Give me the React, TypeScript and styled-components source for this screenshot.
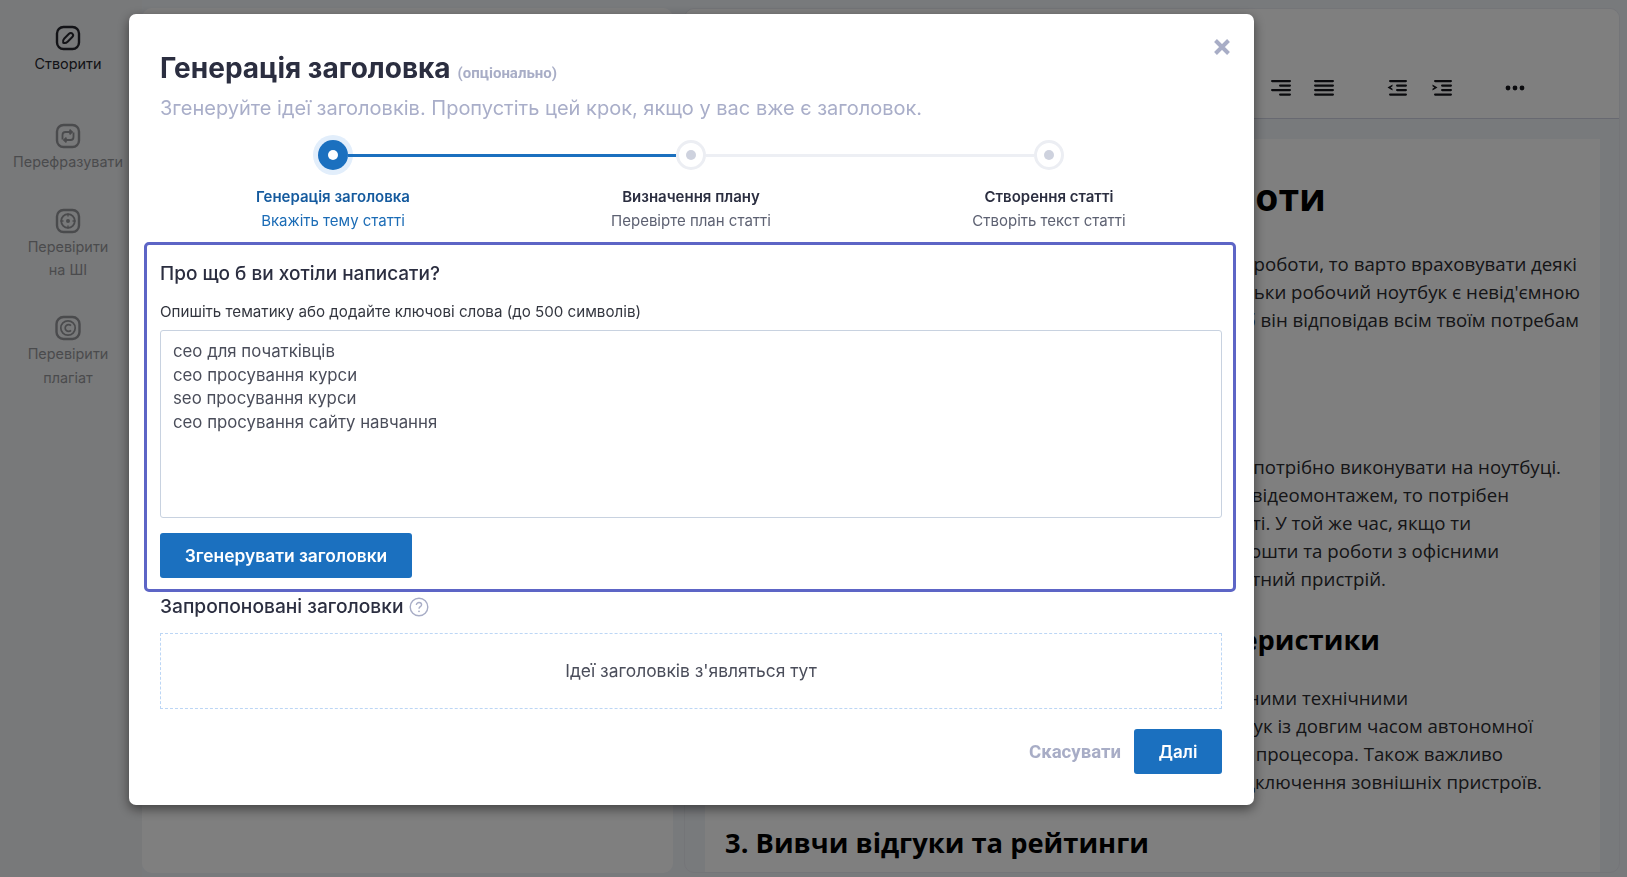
import React from "react";
import styled, { createGlobalStyle } from "styled-components";

const Global = createGlobalStyle`
  html, body { margin: 0; padding: 0; height: 100%; overflow: hidden; }
  body { background: #f1f4f9; font-family: Inter, "Noto Sans", sans-serif; }
  * { box-sizing: border-box; }
`;

const Page = styled.div`
  display: flex;
  height: 877px;
  padding: 8px 6px 4px 0;
  overflow: hidden;
`;
const Sidebar = styled.nav`
  width: 142px;
  margin-top: -8px;
  margin-bottom: -4px;
  padding: 25px 6px 0 0;
  display: flex;
  flex-direction: column;
  gap: 33.7px;
  background: #f1f2f4;
`;
const NavItem = styled.div<{ $active?: boolean }>`
  display: flex;
  flex-direction: column;
  align-items: center;
  font-size: 14.4px;
  line-height: 23.5px;
  text-align: center;
  color: #26272e;
  opacity: ${(p) => (p.$active ? 1 : 0.45)};
  margin-bottom: ${(p) => (p.$active ? "14.3px" : "0")};
  svg { display: block; margin-bottom: 1px; }
`;
const LeftPanel = styled.section`
  width: 531px;
  background: #fff;
  border-radius: 10px;
`;
const RightPanel = styled.section`
  width: 936px;
  margin-left: 11px;
  background: #f1f4f9;
  border-radius: 10px;
  border: 1px solid #e8ebf1;
  display: flex;
  flex-direction: column;
  overflow: hidden;
`;
const Toolbar = styled.div`
  flex: none;
  height: 110px;
  background: #fff;
  border-bottom: 1px solid #d0d3e2;
  display: flex;
  justify-content: flex-end;
  align-items: flex-end;
  padding: 0 94px 21px 0;
`;
const ToolIcon = styled.svg<{ $gap: number }>`
  width: 20px;
  height: 18px;
  margin-left: ${(p) => p.$gap}px;
  fill: #16171c;
`;
const Sheet = styled.article`
  flex: 1;
  margin: 20px 19px 0 20px;
  padding: 37px 20px 0 20px;
  background: #fff;
  font-family: "Open Sans", sans-serif;
  color: #2a2a2e;
  overflow: hidden;
`;
const H1 = styled.h1<{ $inset: number }>`
  margin: 0 0 32px;
  padding-right: ${(p) => p.$inset}px;
  font-size: 37.33px;
  line-height: 42px;
  font-weight: 700;
  color: #000;
  text-align: right;
  white-space: nowrap;
`;
const H2 = styled.h2<{ $inset?: number; $after?: number; $before?: number }>`
  margin: ${(p) => p.$before ?? 27}px 0 ${(p) => p.$after ?? 24}px;
  padding-right: ${(p) => p.$inset ?? 0}px;
  font-size: 27.33px;
  line-height: 40px;
  font-weight: 700;
  color: #000;
  text-align: ${(p) => (p.$inset ? "right" : "left")};
  white-space: nowrap;
`;
const Para = styled.div`
  font-size: 18.67px;
  line-height: 28px;
`;
const Line = styled.div<{ $inset: number }>`
  padding-right: ${(p) => p.$inset}px;
  text-align: right;
  white-space: nowrap;
`;

const Overlay = styled.div`
  position: fixed;
  inset: 0;
  background: rgba(0, 0, 0, 0.5);
  padding: 14px 0 0 129px;
`;
const Modal = styled.div`
  position: relative;
  width: 1125px;
  height: 791px;
  padding: 34px 32px 31px 31px;
  background: #fff;
  border-radius: 7px;
  box-shadow: 0 4px 12px rgba(0, 0, 0, 0.5);
`;
const CloseButton = styled.button`
  position: absolute;
  top: 23px;
  right: 22px;
  width: 20px;
  height: 20px;
  padding: 0;
  border: 0;
  background: none;
  svg { display: block; }
`;
const TitleRow = styled.div`
  display: flex;
  align-items: baseline;
  gap: 7px;
  height: 40px;
  line-height: 40px;
`;
const Title = styled.h2`
  margin: 0;
  font-size: 28px;
  font-weight: 700;
  color: #2b2e40;
  line-height: 40px;
`;
const Optional = styled.span`
  font-family: Roboto, sans-serif;
  font-size: 15px;
  font-weight: 700;
  color: #a8adc6;
`;
const Subtitle = styled.p`
  margin: 6px 0 0;
  font-size: 20px;
  line-height: 28px;
  color: #a9aec9;
`;
const Stepper = styled.div`
  display: grid;
  grid-template-columns: repeat(3, 358px);
  margin: 13px -6px 0;
`;
const Step = styled.div`
  position: relative;
  display: flex;
  flex-direction: column;
  align-items: center;
`;
const Connector = styled.span<{ $active?: boolean }>`
  position: absolute;
  top: 19px;
  left: calc(50% + 15px);
  width: calc(100% - 30px);
  height: 3px;
  background: ${(p) => (p.$active ? "#1b70bf" : "#edeff4")};
`;
const DotSlot = styled.div`
  height: 40px;
  display: flex;
  align-items: center;
`;
const Dot = styled.span<{ $active?: boolean }>`
  width: 30px;
  height: 30px;
  display: flex;
  align-items: center;
  justify-content: center;
  border-radius: 50%;
  background: ${(p) => (p.$active ? "#1b70bf" : "#fff")};
  border: ${(p) => (p.$active ? "0" : "3px solid #eceef3")};
  box-shadow: ${(p) => (p.$active ? "0 0 0 5px #e2eefb" : "none")};
  &::after {
    content: "";
    width: 10px;
    height: 10px;
    border-radius: 50%;
    background: ${(p) => (p.$active ? "#fff" : "#ced2de")};
  }
`;
const StepTitle = styled.div<{ $active?: boolean }>`
  margin-top: 10px;
  font-size: 15px;
  line-height: 24px;
  font-weight: 600;
  color: ${(p) => (p.$active ? "#145a9e" : "#2b2e40")};
`;
const StepSub = styled.div<{ $active?: boolean }>`
  font-size: 15px;
  line-height: 24px;
  color: ${(p) => (p.$active ? "#1b6cb6" : "#5d6172")};
`;
const Focus = styled.section`
  margin: 9px -14px 0 -16px;
  height: 350px;
  padding: 16px 11px 10px 13px;
  border: 3px solid #5d65c6;
  border-radius: 5px;
`;
const FocusTitle = styled.h3`
  margin: 0;
  font-size: 19px;
  line-height: 26px;
  font-weight: 500;
  color: #2b2e40;
`;
const FieldLabel = styled.label`
  display: block;
  margin-top: 14px;
  font-size: 15.15px;
  line-height: 22px;
  color: #33363f;
`;
const TextArea = styled.textarea`
  display: block;
  width: 100%;
  height: 188px;
  margin-top: 7px;
  padding: 9px 12px;
  border: 1px solid #c8d2e0;
  border-radius: 3px;
  outline: none;
  resize: none;
  font-family: Inter, sans-serif;
  font-size: 16.8px;
  line-height: 23.5px;
  color: #4a4d5a;
`;
const Primary = styled.button<{ $wide?: boolean }>`
  display: block;
  height: 45px;
  width: ${(p) => (p.$wide ? "252px" : "88px")};
  margin-top: ${(p) => (p.$wide ? "15px" : "0")};
  padding: 0;
  border: 0;
  border-radius: 3px;
  background: #1b70bf;
  color: #fff;
  font-family: Inter, sans-serif;
  font-size: ${(p) => (p.$wide ? "17.4px" : "17px")};
  font-weight: 600;
`;
const SuggestRow = styled.div`
  display: flex;
  align-items: center;
  gap: 6px;
  height: 28px;
  font-size: 19.2px;
  font-weight: 500;
  color: #2b2e40;
  svg { display: block; margin-top: 2px; }
`;
const Placeholder = styled.div`
  margin-top: 13px;
  height: 76px;
  padding-bottom: 2px;
  display: flex;
  align-items: center;
  justify-content: center;
  border: 1px dashed #bcd6f5;
  font-size: 17.4px;
  color: #4a4d5a;
`;
const Footer = styled.div`
  margin-top: 20px;
  display: flex;
  justify-content: flex-end;
  align-items: center;
  gap: 13px;
`;
const Cancel = styled.button`
  padding: 0;
  border: 0;
  background: none;
  font-family: Roboto, sans-serif;
  font-size: 18.6px;
  font-weight: 700;
  color: #a8adc6;
`;

const Frame = () => <rect x="2" y="2" width="22" height="22" rx="6.5" fill="none" stroke="currentColor" strokeWidth="2.4" />;

const CreateIcon = () => (
  <svg width="26" height="26" viewBox="0 0 26 26">
    <Frame />
    <path d="M8.2 17.8c-.5-1.9.1-3.3 1.1-4.3l4.7-4.7c1.1-1.1 2.5-1.1 3.4-.1.9.9.9 2.3-.1 3.3l-4.7 4.7c-1 1-2.5 1.6-4.4 1.1z" fill="none" stroke="currentColor" strokeWidth="2" strokeLinejoin="round" />
  </svg>
);
const RephraseIcon = () => (
  <svg width="26" height="26" viewBox="0 0 26 26" fill="none" stroke="currentColor" strokeWidth="1.8">
    <Frame />
    <path d="M7.5 16.5v-4.5a3 3 0 0 1 3-3h6" />
    <path d="M14.5 6.7 17 9l-2.5 2.3" />
    <path d="M18.5 9.5v4.5a3 3 0 0 1-3 3h-6" />
    <path d="M11.5 14.7 9 17l2.5 2.3" />
  </svg>
);
const AiIcon = () => (
  <svg width="26" height="26" viewBox="0 0 26 26" fill="none" stroke="currentColor" strokeWidth="1.8">
    <Frame />
    <circle cx="13" cy="13" r="6.8" />
    <circle cx="13" cy="13" r="2" fill="currentColor" stroke="none" />
    <path d="M13 5.5v3M13 17.5v3M5.5 13h3M17.5 13h3" strokeWidth="1.4" />
  </svg>
);
const CopyrightIcon = () => (
  <svg width="26" height="26" viewBox="0 0 26 26" fill="none" stroke="currentColor" strokeWidth="1.7">
    <rect x="1.5" y="2" width="23" height="22" rx="7" strokeWidth="2.4" />
    <circle cx="13" cy="13" r="7.2" />
    <path d="M16 10.6a3.4 3.4 0 1 0 0 4.8" />
  </svg>
);

type ToolProps = { gap: number; rects: [number, number, number][]; extra?: string };
const Tool = ({ gap, rects, extra }: ToolProps) => (
  <ToolIcon $gap={gap} viewBox="0 0 20 18">
    {rects.map(([x, y, w]) => (
      <rect key={`${x}-${y}`} x={x} y={y} width={w} height="2.2" rx="1.1" />
    ))}
    {extra && <path d={extra} />}
  </ToolIcon>
);
const Dots = () => (
  <ToolIcon $gap={53} viewBox="0 0 20 18">
    <circle cx="3" cy="9" r="2.4" />
    <circle cx="10" cy="9" r="2.4" />
    <circle cx="17" cy="9" r="2.4" />
  </ToolIcon>
);

export default function App() {
  return (
    <>
      <Global />
      <Page>
        <Sidebar>
          <NavItem $active><CreateIcon />Створити</NavItem>
          <NavItem><RephraseIcon />Перефразувати</NavItem>
          <NavItem><AiIcon />Перевірити<br />на ШІ</NavItem>
          <NavItem><CopyrightIcon />Перевірити<br />плагіат</NavItem>
        </Sidebar>
        <LeftPanel />
        <RightPanel>
          <Toolbar>
            <Tool gap={0} rects={[[0, 1, 20], [8, 5.5, 12], [0, 10, 20], [8, 14.5, 12]]} />
            <Tool gap={23} rects={[[0, 1, 20], [0, 5.5, 20], [0, 10, 20], [0, 14.5, 20]]} />
            <Tool gap={53} rects={[[2, 1, 18], [9, 5.5, 11], [9, 10, 11], [2, 14.5, 18]]} extra="M5.5 5.5 0.5 8.5l5 3V9.7L3.6 8.5l1.9-1.2z" />
            <Tool gap={25} rects={[[2, 1, 18], [9, 5.5, 11], [9, 10, 11], [2, 14.5, 18]]} extra="M.5 5.5l5 3-5 3V9.7l1.9-1.2L.5 7.3z" />
            <Dots />
          </Toolbar>
          <Sheet>
            <H1 $inset={254}>Вибір ноутбука для роботи</H1>
            <Para>
              <Line $inset={3}>Обираючи новий ноутбук для роботи, то варто враховувати деякі</Line>
              <Line $inset={0}>Адже сьогодні ми бачимо, наскільки робочий ноутбук є невід'ємною</Line>
              <Line $inset={1}>частиною кожного дня, і важливо, щоб він відповідав всім твоїм потребам</Line>
            </Para>
            <H2 $before={46} $after={33}>1. Визнач свої потреби</H2>
            <Para>
              <Line $inset={19}>Перш за все, визнач, які завдання тобі потрібно виконувати на ноутбуці.</Line>
              <Line $inset={71}>Якщо ти займаєшся графікою або відеомонтажем, то потрібен</Line>
              <Line $inset={109}>потужний процесор і багато пам'яті. У той же час, якщо ти</Line>
              <Line $inset={81}>використовуєш його для пошти та роботи з офісними</Line>
              <Line $inset={194}>документами, достатньо простий компактний пристрій.</Line>
            </Para>
            <H2 $inset={200}>2. Звертай увагу на характеристики</H2>
            <Para>
              <Line $inset={172}>Обирай ноутбук з необхідними технічними</Line>
              <Line $inset={47}>Для роботи в дорозі підійде ноутбук із довгим часом автономної</Line>
              <Line $inset={77}>Зверни увагу на тип та швидкість процесора. Також важливо</Line>
              <Line $inset={38}>мати достатньо портів для підключення зовнішніх пристроїв.</Line>
            </Para>
            <H2>3. Вивчи відгуки та рейтинги</H2>
          </Sheet>
        </RightPanel>
      </Page>
      <Overlay>
        <Modal>
          <CloseButton aria-label="Закрити">
            <svg width="20" height="20" viewBox="0 0 20 20" fill="none" stroke="#a8adc6" strokeWidth="4">
              <path d="M3.5 3.5l13 13M16.5 3.5l-13 13" />
            </svg>
          </CloseButton>
          <TitleRow>
            <Title>Генерація заголовка</Title>
            <Optional>(опціонально)</Optional>
          </TitleRow>
          <Subtitle>Згенеруйте ідеї заголовків. Пропустіть цей крок, якщо у вас вже є заголовок.</Subtitle>
          <Stepper>
            <Step>
              <Connector $active />
              <DotSlot><Dot $active /></DotSlot>
              <StepTitle $active>Генерація заголовка</StepTitle>
              <StepSub $active>Вкажіть тему статті</StepSub>
            </Step>
            <Step>
              <Connector />
              <DotSlot><Dot /></DotSlot>
              <StepTitle>Визначення плану</StepTitle>
              <StepSub>Перевірте план статті</StepSub>
            </Step>
            <Step>
              <DotSlot><Dot /></DotSlot>
              <StepTitle>Створення статті</StepTitle>
              <StepSub>Створіть текст статті</StepSub>
            </Step>
          </Stepper>
          <Focus>
            <FocusTitle>Про що б ви хотіли написати?</FocusTitle>
            <FieldLabel>Опишіть тематику або додайте ключові слова (до 500 символів)</FieldLabel>
            <TextArea defaultValue={"сео для початківців\nсео просування курси\nseo просування курси\nсео просування сайту навчання"} />
            <Primary $wide>Згенерувати заголовки</Primary>
          </Focus>
          <SuggestRow>
            Запропоновані заголовки
            <svg width="20" height="20" viewBox="0 0 20 20" fill="none" stroke="#a8adc6" strokeWidth="1.4">
              <circle cx="10" cy="10" r="8.8" />
              <path d="M7.4 8c0-1.6 1.2-2.5 2.6-2.5s2.6.9 2.6 2.2c0 1.9-2.6 2-2.6 4" />
              <circle cx="10" cy="14.3" r=".9" fill="#a8adc6" stroke="none" />
            </svg>
          </SuggestRow>
          <Placeholder>Ідеї заголовків з'являться тут</Placeholder>
          <Footer>
            <Cancel>Скасувати</Cancel>
            <Primary>Далі</Primary>
          </Footer>
        </Modal>
      </Overlay>
    </>
  );
}
